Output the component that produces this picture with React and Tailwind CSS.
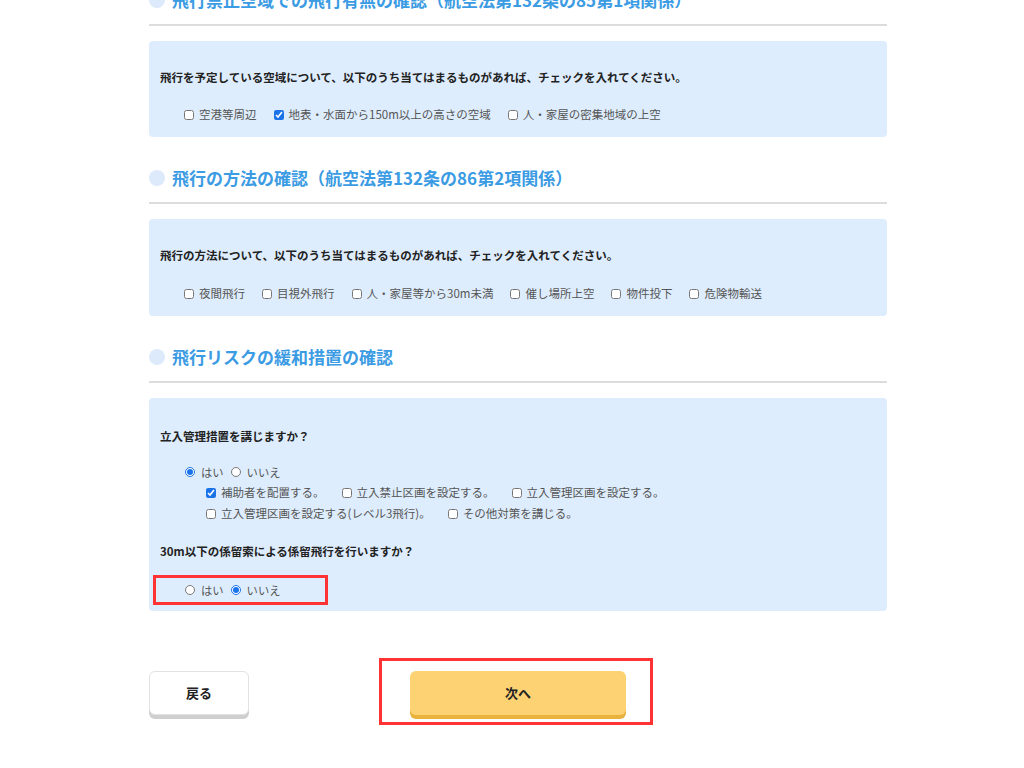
import React from 'react';

const font = { fontFamily: '"Noto Sans CJK JP", "Noto Sans", sans-serif' };

const SectionTitle = ({ children }) => (
  <div>
    <div className="flex items-center h-[24px]">
      <span className="w-[16px] h-[16px] rounded-full bg-[#dceafb] mr-[7px] shrink-0"></span>
      <h2 className="text-[17px] font-bold text-[#3b9be3] leading-[24px] whitespace-nowrap">{children}</h2>
    </div>
    <div className="mt-[12px] h-[2px] bg-[#dcdcdc]"></div>
  </div>
);

const Check = ({ label, checked }) => (
  <label className="inline-flex items-center mr-[17px]">
    <input
      type="checkbox"
      defaultChecked={checked}
      className="m-0 w-[10px] h-[10px] accent-[#1a73e8] mr-[5px]"
    />
    <span className="text-[11.5px] text-[#555]">{label}</span>
  </label>
);

const Radio = ({ name, label, checked }) => (
  <label className="inline-flex items-center mr-[7px]">
    <input
      type="radio"
      name={name}
      defaultChecked={checked}
      className="m-0 w-[10px] h-[10px] accent-[#1a73e8] mr-[6px]"
    />
    <span className="text-[11.3px] text-[#555]">{label}</span>
  </label>
);

const Question = ({ children }) => (
  <p className="text-[11.5px] font-bold text-[#222] leading-[16px] whitespace-nowrap">{children}</p>
);

export default function App() {
  return (
    <div style={font} className="bg-white min-h-[768px] overflow-hidden">
      <div className="ml-[149px] w-[738px] -mt-[12px] pb-[40px]">
        <SectionTitle>飛行禁止空域での飛行有無の確認（航空法第132条の85第1項関係）</SectionTitle>
        <div className="mt-[15px] bg-[#deedfd] rounded-[4px] pl-[11px] pr-[11px] pt-[28px] pb-[14px]">
          <Question>飛行を予定している空域について、以下のうち当てはまるものがあれば、チェックを入れてください。</Question>
          <div className="mt-[22px] pl-[24px] flex items-center h-[16px]">
            <Check label="空港等周辺" />
            <Check label="地表・水面から150m以上の高さの空域" checked />
            <Check label="人・家屋の密集地域の上空" />
          </div>
        </div>

        <div className="mt-[29px]">
          <SectionTitle>飛行の方法の確認（航空法第132条の86第2項関係）</SectionTitle>
        </div>
        <div className="mt-[15px] bg-[#deedfd] rounded-[4px] pl-[11px] pr-[11px] pt-[28px] pb-[14px]">
          <Question>飛行の方法について、以下のうち当てはまるものがあれば、チェックを入れてください。</Question>
          <div className="mt-[23px] pl-[24px] flex items-center h-[16px]">
            <Check label="夜間飛行" />
            <Check label="目視外飛行" />
            <Check label="人・家屋等から30m未満" />
            <Check label="催し場所上空" />
            <Check label="物件投下" />
            <Check label="危険物輸送" />
          </div>
        </div>

        <div className="mt-[29px]">
          <SectionTitle>飛行リスクの緩和措置の確認</SectionTitle>
        </div>
        <div className="mt-[15px] bg-[#deedfd] rounded-[4px] pl-[11px] pr-[11px] pt-[30px] pb-[13px]">
          <Question>立入管理措置を講じますか？</Question>
          <div className="mt-[20px] pl-[25px] flex items-center h-[16px]">
            <Radio name="kanri" label="はい" checked />
            <Radio name="kanri" label="いいえ" />
          </div>
          <div className="mt-[5px] pl-[46px] flex items-center h-[16px]">
            <Check label="補助者を配置する。" checked />
            <Check label="立入禁止区画を設定する。" />
            <Check label="立入管理区画を設定する。" />
          </div>
          <div className="mt-[5px] pl-[46px] flex items-center h-[16px]">
            <Check label="立入管理区画を設定する(レベル3飛行)。" />
            <Check label="その他対策を講じる。" />
          </div>
          <div className="mt-[21px]">
            <Question>30m以下の係留索による係留飛行を行いますか？</Question>
          </div>
          <div className="relative mt-[23px] pl-[25px] flex items-center h-[16px]">
            <span className="absolute -left-[7px] -top-[7px] -bottom-[7px] w-[175px] border-[3px] border-[#ff3333] pointer-events-none"></span>
            <Radio name="keiryu" label="はい" />
            <Radio name="keiryu" label="いいえ" checked />
          </div>
        </div>

        <div className="mt-[60px] grid grid-cols-[1fr_auto_1fr] items-start">
          <div>
            <button className="w-[100px] h-[44px] bg-white border border-[#e2e2e2] rounded-[6px] shadow-[0_4px_0_#cfcfcf] text-[13px] font-bold text-[#222]">
              戻る
            </button>
          </div>
          <div className="relative">
            <span className="absolute -left-[31px] -right-[27px] -top-[13px] -bottom-[10px] border-[3px] border-[#ff3333] pointer-events-none"></span>
            <button className="w-[216px] h-[44px] bg-[#fdd273] rounded-[6px] shadow-[0_4px_0_#e9b23d] text-[13px] font-bold text-[#222]">
              次へ
            </button>
          </div>
          <div></div>
        </div>
      </div>
    </div>
  );
}
